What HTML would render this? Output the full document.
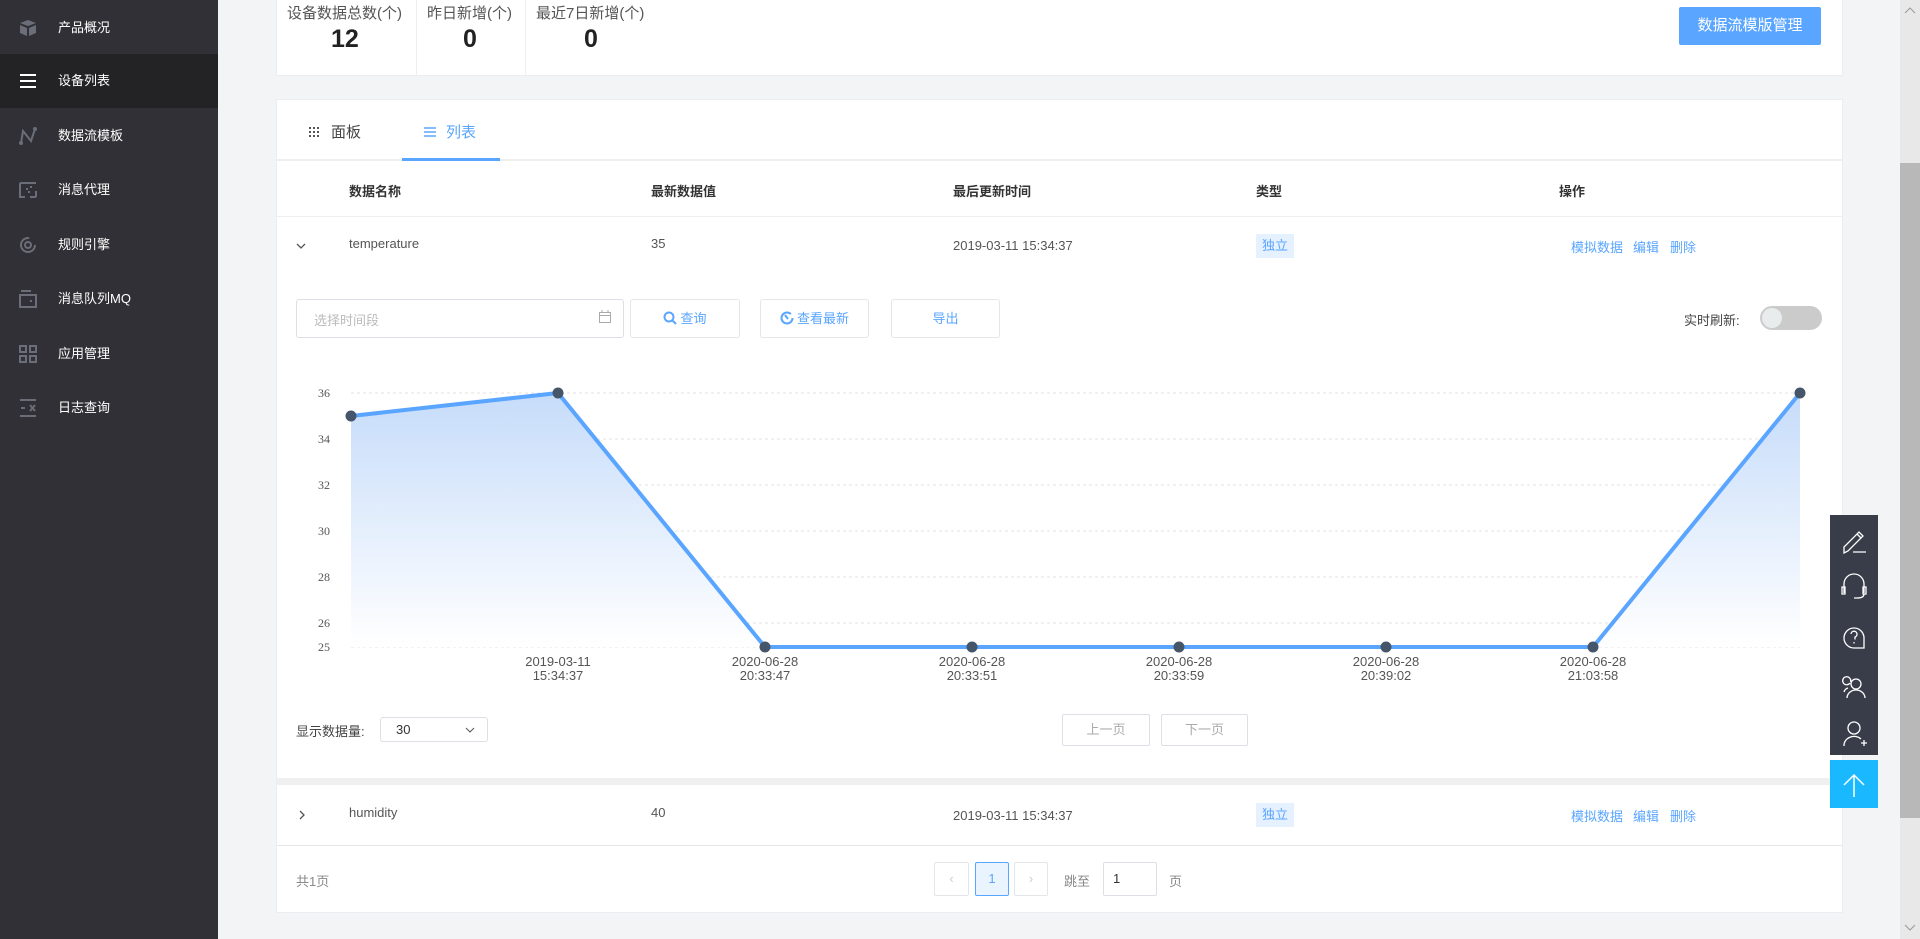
<!DOCTYPE html>
<html><head><meta charset="utf-8"><style>
*{margin:0;padding:0;box-sizing:border-box}
body{width:1920px;height:939px;overflow:hidden;background:#f3f4f6;font-family:"Liberation Sans","Noto Sans CJK SC",sans-serif;position:relative;color:#333}
.a{position:absolute}
.side{left:0;top:0;width:218px;height:939px;background:#303036}
.item{position:absolute;left:0;width:218px;height:54px;color:#fff;font-size:13px;line-height:54px}
.item span{position:absolute;left:58px}
.item svg{position:absolute;left:19px;top:18px}
.card{background:#fff;border:1px solid #ebedf0}
.btn{position:absolute;border:1px solid #e4e6ea;border-radius:3px;background:#fff;color:#5aa5ff;font-size:13px;text-align:center;line-height:37px}
.th{position:absolute;top:181px;font-size:13px;font-weight:bold;color:#333}
.td{position:absolute;font-size:13px;color:#555}
.lnk{color:#5aa5ff;font-size:13px;position:absolute}
.tag{position:absolute;background:#e6f1ff;color:#5aa5ff;font-size:13px;width:38px;height:24px;line-height:24px;text-align:center}
</style></head><body>
<div class="a side">
 <div class="item" style="top:1px"><svg width="18" height="18" viewBox="0 0 18 18"><path d="M9 1 L17 4 L9 7 L1 4Z M1 6 L8 9 V17 L1 14Z M17 6 L10 9 V17 L17 14Z" fill="#6b6e78"/></svg><span>产品概况</span></div>
 <div class="item" style="top:54px;background:#232325"><svg width="18" height="18" viewBox="0 0 18 18"><path d="M1 3H17M1 9H17M1 15H17" stroke="#fff" stroke-width="2"/></svg><span>设备列表</span></div>
 <div class="item" style="top:109px"><svg width="18" height="18" viewBox="0 0 18 18"><path d="M2 16 L4 4 L12 14 L16 2" stroke="#6b6e78" stroke-width="2" fill="none"/><circle cx="2" cy="16" r="2" fill="#6b6e78"/><circle cx="16" cy="2" r="2" fill="#6b6e78"/></svg><span>数据流模板</span></div>
 <div class="item" style="top:163px"><svg width="18" height="18" viewBox="0 0 18 18"><path d="M1 2H17M1 2V16H6M17 16V10M11 16H17M7 8h2M11 6h2M9 11h2" stroke="#6b6e78" stroke-width="2" fill="none"/></svg><span>消息代理</span></div>
 <div class="item" style="top:218px"><svg width="18" height="18" viewBox="0 0 18 18"><circle cx="9" cy="9" r="7" stroke="#6b6e78" stroke-width="2" fill="none" stroke-dasharray="34 10"/><circle cx="9" cy="9" r="3" stroke="#6b6e78" stroke-width="2" fill="none"/></svg><span>规则引擎</span></div>
 <div class="item" style="top:272px"><svg width="18" height="18" viewBox="0 0 18 18"><path d="M2 1H12M1 5H17V17H1Z" stroke="#6b6e78" stroke-width="2" fill="none"/><rect x="11" y="10" width="2" height="2" fill="#6b6e78"/></svg><span>消息队列MQ</span></div>
 <div class="item" style="top:327px"><svg width="18" height="18" viewBox="0 0 18 18"><path d="M1 1h6v6H1zM11 1h6v6h-6zM1 11h6v6H1zM11 11h6v6h-6z" stroke="#6b6e78" stroke-width="2" fill="none"/></svg><span>应用管理</span></div>
 <div class="item" style="top:381px"><svg width="18" height="18" viewBox="0 0 18 18"><path d="M1 1H17M1 17H17M2 9H6M11 6L16 12M16 6L11 12" stroke="#6b6e78" stroke-width="2"/></svg><span>日志查询</span></div>
</div>

<div class="a card" style="left:276px;top:-2px;width:1567px;height:78px"></div>
<div class="a" style="left:416px;top:0;width:1px;height:76px;background:#eee"></div>
<div class="a" style="left:525px;top:0;width:1px;height:76px;background:#eee"></div>
<div class="a" style="left:287px;top:2px;font-size:15px;color:#555">设备数据总数(个)</div>
<div class="a" style="left:331px;top:25px;font-size:25px;font-weight:bold;color:#222">12</div>
<div class="a" style="left:427px;top:2px;font-size:15px;color:#555">昨日新增(个)</div>
<div class="a" style="left:463px;top:25px;font-size:25px;font-weight:bold;color:#222">0</div>
<div class="a" style="left:536px;top:2px;font-size:15px;color:#555">最近7日新增(个)</div>
<div class="a" style="left:584px;top:25px;font-size:25px;font-weight:bold;color:#222">0</div>
<div class="a" style="left:1679px;top:7px;width:142px;height:38px;background:#5aa5ff;border-radius:2px;color:#fff;font-size:15px;line-height:38px;text-align:center">数据流模版管理</div>

<div class="a card" style="left:276px;top:99px;width:1567px;height:814px"></div>
<svg class="a" style="left:309px;top:127px" width="10" height="10"><g fill="#555"><rect x="0" y="0" width="2" height="2"/><rect x="4" y="0" width="2" height="2"/><rect x="8" y="0" width="2" height="2"/><rect x="0" y="4" width="2" height="2"/><rect x="4" y="4" width="2" height="2"/><rect x="8" y="4" width="2" height="2"/><rect x="0" y="8" width="2" height="2"/><rect x="4" y="8" width="2" height="2"/><rect x="8" y="8" width="2" height="2"/></g></svg>
<div class="a" style="left:331px;top:121px;font-size:15px;color:#444">面板</div>
<svg class="a" style="left:424px;top:127px" width="12" height="10"><path d="M0 1H12M0 5H12M0 9H12" stroke="#5aa5ff" stroke-width="1.5"/></svg>
<div class="a" style="left:446px;top:121px;font-size:15px;color:#5aa5ff">列表</div>
<div class="a" style="left:277px;top:159px;width:1565px;height:2px;background:#eee"></div>
<div class="a" style="left:402px;top:158px;width:98px;height:3px;background:#5aa5ff"></div>

<div class="th" style="left:349px">数据名称</div>
<div class="th" style="left:651px">最新数据值</div>
<div class="th" style="left:953px">最后更新时间</div>
<div class="th" style="left:1256px">类型</div>
<div class="th" style="left:1559px">操作</div>
<div class="a" style="left:277px;top:216px;width:1565px;height:1px;background:#eee"></div>

<svg class="a" style="left:296px;top:242px" width="10" height="8"><path d="M1 2L5 6L9 2" stroke="#555" stroke-width="1.3" fill="none"/></svg>
<div class="td" style="left:349px;top:236px">temperature</div>
<div class="td" style="left:651px;top:236px">35</div>
<div class="td" style="left:953px;top:238px">2019-03-11 15:34:37</div>
<div class="tag" style="left:1256px;top:234px">独立</div>
<div class="lnk" style="left:1571px;top:237px">模拟数据</div>
<div class="lnk" style="left:1633px;top:237px">编辑</div>
<div class="lnk" style="left:1670px;top:237px">删除</div>

<div class="a" style="left:296px;top:299px;width:328px;height:39px;border:1px solid #dcdfe6;border-radius:3px"></div>
<div class="a" style="left:314px;top:310px;font-size:13px;color:#bbb">选择时间段</div>
<svg class="a" style="left:599px;top:310px" width="12" height="13"><path d="M0.5 2.5H11.5V12.5H0.5ZM0.5 5.5H11.5M3 0V3M9 0V3" stroke="#aaa" fill="none"/></svg>
<div class="btn" style="left:630px;top:299px;width:110px;height:39px"><svg width="14" height="14" style="vertical-align:-2px;margin-right:3px"><circle cx="6" cy="6" r="4.5" stroke="#5aa5ff" stroke-width="2" fill="none"/><path d="M9 9L13 13" stroke="#5aa5ff" stroke-width="2"/></svg>查询</div>
<div class="btn" style="left:760px;top:299px;width:109px;height:39px"><svg width="14" height="14" style="vertical-align:-2px;margin-right:3px"><circle cx="7" cy="7" r="5.5" stroke="#5aa5ff" stroke-width="2" fill="none" stroke-dasharray="30 5"/><path d="M5 4L8 8" stroke="#5aa5ff" stroke-width="2"/></svg>查看最新</div>
<div class="btn" style="left:891px;top:299px;width:109px;height:39px">导出</div>
<div class="a" style="left:1684px;top:310px;font-size:13px;color:#444">实时刷新:</div>
<div class="a" style="left:1760px;top:306px;width:62px;height:24px;border-radius:12px;background:#cbcbcb"></div>
<div class="a" style="left:1762px;top:308px;width:20px;height:20px;border-radius:10px;background:#e9eced"></div>

<svg class="a" style="left:0;top:0" width="1920" height="939">
<defs><linearGradient id="g" x1="0" y1="393" x2="0" y2="647" gradientUnits="userSpaceOnUse"><stop offset="0" stop-color="#c6dcfa"/><stop offset="1" stop-color="#ffffff"/></linearGradient></defs>
<g stroke="#e3e3e3" stroke-dasharray="3 3"><path d="M351 393H1800M351 439H1800M351 485H1800M351 531H1800M351 577H1800M351 623H1800M351 647H1800"/></g>
<g font-size="12" fill="#555" text-anchor="end" font-family="Liberation Serif,serif"><text x="330" y="397">36</text><text x="330" y="443">34</text><text x="330" y="489">32</text><text x="330" y="535">30</text><text x="330" y="581">28</text><text x="330" y="627">26</text><text x="330" y="651">25</text></g>
<path d="M351 416L558 393L765 647L972 647L1179 647L1386 647L1593 647L1800 393L1800 647L351 647Z" fill="url(#g)"/>
<path d="M351 416L558 393L765 647L972 647L1179 647L1386 647L1593 647L1800 393" stroke="#5aa5ff" stroke-width="4" fill="none"/>
<g fill="#46566a"><circle cx="351" cy="416" r="5.5"/><circle cx="558" cy="393" r="5.5"/><circle cx="765" cy="647" r="5.5"/><circle cx="972" cy="647" r="5.5"/><circle cx="1179" cy="647" r="5.5"/><circle cx="1386" cy="647" r="5.5"/><circle cx="1593" cy="647" r="5.5"/><circle cx="1800" cy="393" r="5.5"/></g>
<g font-size="13" fill="#555" text-anchor="middle"><text x="558" y="666">2019-03-11</text><text x="558" y="680">15:34:37</text><text x="765" y="666">2020-06-28</text><text x="765" y="680">20:33:47</text><text x="972" y="666">2020-06-28</text><text x="972" y="680">20:33:51</text><text x="1179" y="666">2020-06-28</text><text x="1179" y="680">20:33:59</text><text x="1386" y="666">2020-06-28</text><text x="1386" y="680">20:39:02</text><text x="1593" y="666">2020-06-28</text><text x="1593" y="680">21:03:58</text></g>
</svg>

<div class="a" style="left:296px;top:721px;font-size:13px;color:#444">显示数据量:</div>
<div class="a" style="left:380px;top:717px;width:108px;height:25px;border:1px solid #dcdfe6;border-radius:3px;font-size:13px;line-height:23px;padding-left:15px;color:#333">30<svg width="10" height="6" style="position:absolute;right:12px;top:9px"><path d="M1 1L5 5L9 1" stroke="#555" fill="none"/></svg></div>
<div class="a" style="left:1062px;top:714px;width:88px;height:32px;border:1px solid #dcdfe6;border-radius:2px;font-size:13px;line-height:30px;text-align:center;color:#aaa">上一页</div>
<div class="a" style="left:1161px;top:714px;width:87px;height:32px;border:1px solid #dcdfe6;border-radius:2px;font-size:13px;line-height:30px;text-align:center;color:#aaa">下一页</div>

<div class="a" style="left:277px;top:778px;width:1565px;height:7px;background:#f0f0f0"></div>
<svg class="a" style="left:298px;top:810px" width="8" height="10"><path d="M2 1L6 5L2 9" stroke="#555" stroke-width="1.3" fill="none"/></svg>
<div class="td" style="left:349px;top:805px">humidity</div>
<div class="td" style="left:651px;top:805px">40</div>
<div class="td" style="left:953px;top:808px">2019-03-11 15:34:37</div>
<div class="tag" style="left:1256px;top:803px">独立</div>
<div class="lnk" style="left:1571px;top:806px">模拟数据</div>
<div class="lnk" style="left:1633px;top:806px">编辑</div>
<div class="lnk" style="left:1670px;top:806px">删除</div>
<div class="a" style="left:277px;top:845px;width:1565px;height:1px;background:#e6e6e6"></div>

<div class="a" style="left:296px;top:871px;font-size:13px;color:#888">共1页</div>
<div class="a" style="left:934px;top:862px;width:35px;height:34px;border:1px solid #e4e6ea;border-radius:2px;color:#ccc;font-size:13px;text-align:center;line-height:32px">‹</div>
<div class="a" style="left:975px;top:862px;width:34px;height:34px;border:1px solid #5aa5ff;background:#eaf4ff;border-radius:2px;color:#5aa5ff;font-size:13px;text-align:center;line-height:32px">1</div>
<div class="a" style="left:1014px;top:862px;width:34px;height:34px;border:1px solid #e4e6ea;border-radius:2px;color:#ccc;font-size:13px;text-align:center;line-height:32px">›</div>
<div class="a" style="left:1064px;top:871px;font-size:13px;color:#888">跳至</div>
<div class="a" style="left:1103px;top:862px;width:54px;height:34px;border:1px solid #dcdfe6;border-radius:2px;font-size:13px;line-height:32px;padding-left:9px">1</div>
<div class="a" style="left:1169px;top:871px;font-size:13px;color:#888">页</div>

<div class="a" style="left:1830px;top:515px;width:48px;height:240px;background:#393d49"></div>
<svg class="a" style="left:1830px;top:515px" width="48" height="240" fill="none" stroke="#fff" stroke-width="1.3">
<path d="M14 38L14 32L29 17L33 21L18 36Z M27 19L31 23 M23 37H36"/>
<path d="M14 78V69a10 10 0 0 1 20 0V78 M12 72h3v7h-3z M33 72h3v7h-3z M34 79q0 4-7 4h-3"/>
<path d="M24 133a10 10 0 1 1 10-10V133Z"/><path d="M21 119a3 3 0 1 1 4 3v2.5 M24 127v1.5"/>
<circle cx="26" cy="169" r="5"/><path d="M17 183a9 8 0 0 1 18 0 M20 168a4 4 0 1 1 0.5-1 M14 177a6 6 0 0 1 4-4"/>
<circle cx="24" cy="213" r="6"/><path d="M14 231a10 9 0 0 1 17-7 M31 228h6 M34 225v6"/>
</svg>
<div class="a" style="left:1830px;top:760px;width:48px;height:48px;background:#1ab8fe"></div>
<svg class="a" style="left:1830px;top:760px" width="48" height="48"><path d="M24 37V15M14 25L24 15L34 25" stroke="#fff" stroke-width="1.5" fill="none"/></svg>

<div class="a" style="left:1900px;top:0;width:20px;height:939px;background:#e8e8e8"></div>
<div class="a" style="left:1900px;top:163px;width:20px;height:655px;background:#b8b8b8"></div>
<svg class="a" style="left:1900px;top:4px" width="20" height="12"><path d="M5 9L10 4L15 9" stroke="#999" fill="none"/></svg>
<svg class="a" style="left:1900px;top:922px" width="20" height="12"><path d="M5 3L10 8L15 3" stroke="#999" fill="none"/></svg>
</body></html>
